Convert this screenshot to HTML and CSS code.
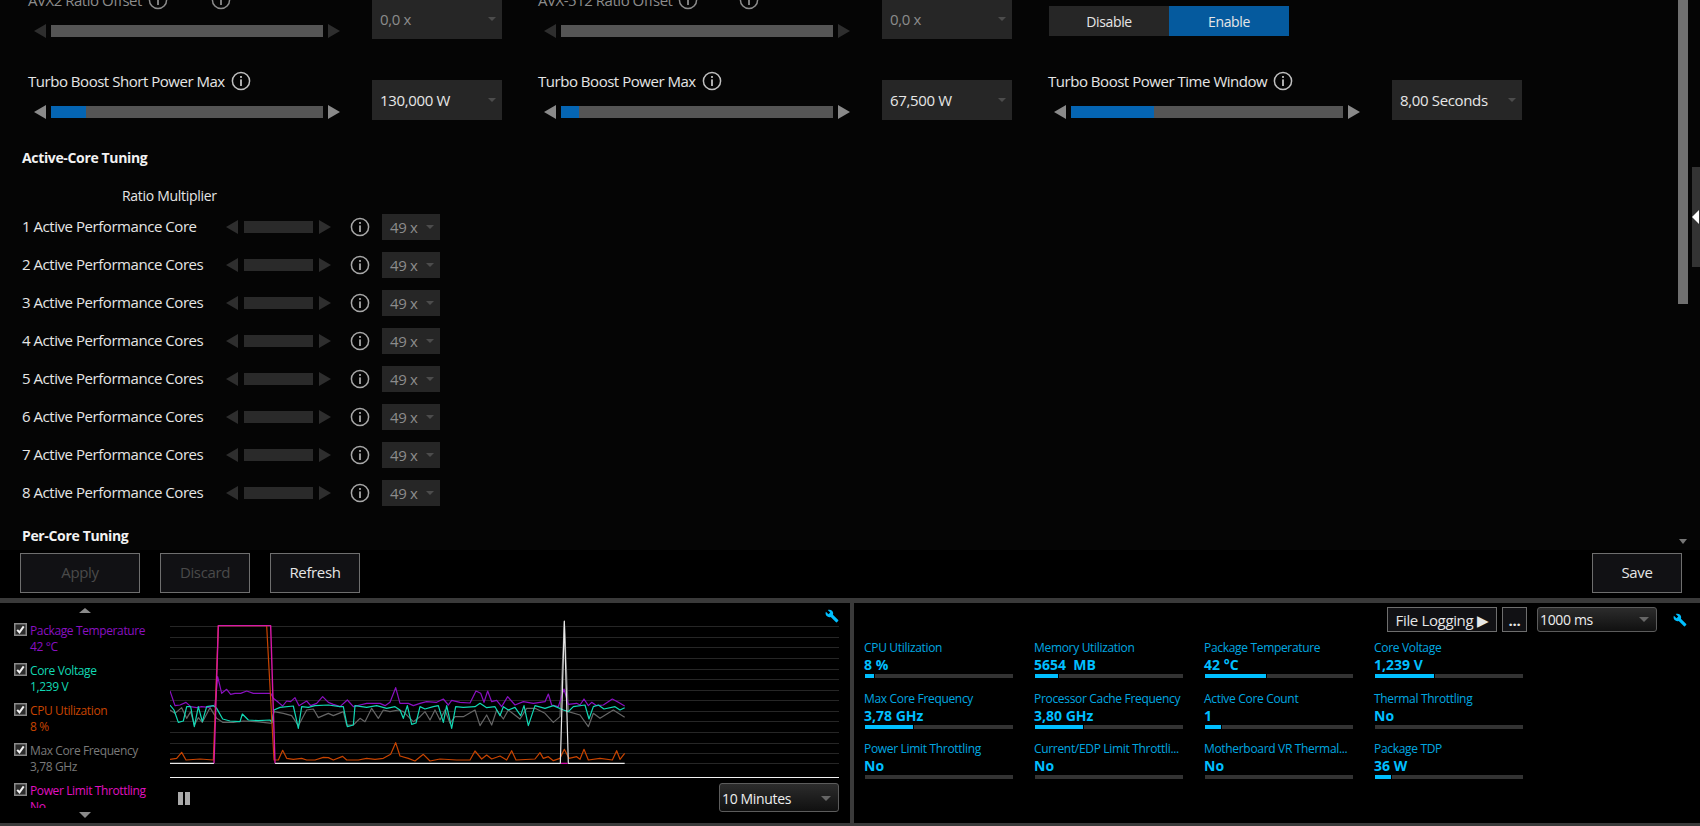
FILE: index.html
```html
<!DOCTYPE html>
<html lang="en">
<head>
<meta charset="utf-8">
<title>Intel XTU</title>
<link rel="stylesheet" href="styles.css">
</head>
<body>
<svg class="defs" width="0" height="0" aria-hidden="true">
  <symbol id="info" viewBox="0 0 20 20">
    <circle cx="10" cy="10" r="8.6" fill="none" stroke="currentColor" stroke-width="1.5"/>
    <rect x="9.1" y="8.4" width="1.8" height="6.6" fill="currentColor"/>
    <rect x="9.1" y="5" width="1.8" height="1.9" fill="currentColor"/>
  </symbol>
  <symbol id="wrench" viewBox="0 0 24 24">
    <path fill="currentColor" d="M22.7 19l-9.1-9.1c.9-2.3.4-5-1.5-6.9-2-2-5-2.4-7.4-1.3L9 6 6 9 1.6 4.7C.4 7.1.9 10.1 2.9 12.1c1.9 1.9 4.6 2.4 6.9 1.5l9.1 9.1c.4.4 1 .4 1.4 0l2.3-2.3c.5-.4.5-1.1.1-1.4z"/>
  </symbol>
  <symbol id="check" viewBox="0 0 13 13">
    <rect x=".75" y=".75" width="11.5" height="11.5" fill="#2b2b2b" stroke="#8a8a8a" stroke-width="1.5"/>
    <path d="M3.2 6.8l2.3 2.6 4.2-6" fill="none" stroke="#f2f2f2" stroke-width="2"/>
  </symbol>
</svg>

<main class="tuning">
  <div class="scroller">
    <div class="settings">
      <div class="setting">
        <div class="setting-main">
          <div class="setting-label dim">AVX2 Ratio Offset <svg class="info"><use href="#info"/></svg><svg class="info second"><use href="#info"/></svg></div>
          <div class="slider"><i class="arrow left off"></i><div class="track"></div><i class="arrow right off"></i></div>
        </div>
        <div class="select dim"><span>0,0 x</span><i class="caret"></i></div>
      </div>
      <div class="setting">
        <div class="setting-main">
          <div class="setting-label dim">AVX-512 Ratio Offset <svg class="info"><use href="#info"/></svg><svg class="info second-b"><use href="#info"/></svg></div>
          <div class="slider"><i class="arrow left off"></i><div class="track"></div><i class="arrow right off"></i></div>
        </div>
        <div class="select dim"><span>0,0 x</span><i class="caret"></i></div>
      </div>
      <div class="setting">
        <div class="toggle"><span class="toggle-item">Disable</span><span class="toggle-item on">Enable</span></div>
      </div>

      <div class="setting">
        <div class="setting-main">
          <div class="setting-label">Turbo Boost Short Power Max <svg class="info"><use href="#info"/></svg></div>
          <div class="slider"><i class="arrow left"></i><div class="track"><div class="track-fill" style="width:35px"></div></div><i class="arrow right"></i></div>
        </div>
        <div class="select"><span>130,000 W</span><i class="caret"></i></div>
      </div>
      <div class="setting">
        <div class="setting-main">
          <div class="setting-label">Turbo Boost Power Max <svg class="info"><use href="#info"/></svg></div>
          <div class="slider"><i class="arrow left"></i><div class="track"><div class="track-fill" style="width:18px"></div></div><i class="arrow right"></i></div>
        </div>
        <div class="select"><span>67,500 W</span><i class="caret"></i></div>
      </div>
      <div class="setting">
        <div class="setting-main">
          <div class="setting-label">Turbo Boost Power Time Window <svg class="info"><use href="#info"/></svg></div>
          <div class="slider"><i class="arrow left"></i><div class="track"><div class="track-fill" style="width:83px"></div></div><i class="arrow right"></i></div>
        </div>
        <div class="select"><span>8,00 Seconds</span><i class="caret"></i></div>
      </div>
    </div>

    <h2 class="section-title">Active-Core Tuning</h2>
    <div class="ratio-head">Ratio Multiplier</div>
    <div class="core-list">
      <div class="core-row"><span class="core-name">1 Active Performance Core</span><i class="arrow left off"></i><div class="core-track"></div><i class="arrow right off"></i><svg class="info core-info"><use href="#info"/></svg><div class="core-select"><span>49 x</span><i class="caret"></i></div></div>
      <div class="core-row"><span class="core-name">2 Active Performance Cores</span><i class="arrow left off"></i><div class="core-track"></div><i class="arrow right off"></i><svg class="info core-info"><use href="#info"/></svg><div class="core-select"><span>49 x</span><i class="caret"></i></div></div>
      <div class="core-row"><span class="core-name">3 Active Performance Cores</span><i class="arrow left off"></i><div class="core-track"></div><i class="arrow right off"></i><svg class="info core-info"><use href="#info"/></svg><div class="core-select"><span>49 x</span><i class="caret"></i></div></div>
      <div class="core-row"><span class="core-name">4 Active Performance Cores</span><i class="arrow left off"></i><div class="core-track"></div><i class="arrow right off"></i><svg class="info core-info"><use href="#info"/></svg><div class="core-select"><span>49 x</span><i class="caret"></i></div></div>
      <div class="core-row"><span class="core-name">5 Active Performance Cores</span><i class="arrow left off"></i><div class="core-track"></div><i class="arrow right off"></i><svg class="info core-info"><use href="#info"/></svg><div class="core-select"><span>49 x</span><i class="caret"></i></div></div>
      <div class="core-row"><span class="core-name">6 Active Performance Cores</span><i class="arrow left off"></i><div class="core-track"></div><i class="arrow right off"></i><svg class="info core-info"><use href="#info"/></svg><div class="core-select"><span>49 x</span><i class="caret"></i></div></div>
      <div class="core-row"><span class="core-name">7 Active Performance Cores</span><i class="arrow left off"></i><div class="core-track"></div><i class="arrow right off"></i><svg class="info core-info"><use href="#info"/></svg><div class="core-select"><span>49 x</span><i class="caret"></i></div></div>
      <div class="core-row"><span class="core-name">8 Active Performance Cores</span><i class="arrow left off"></i><div class="core-track"></div><i class="arrow right off"></i><svg class="info core-info"><use href="#info"/></svg><div class="core-select"><span>49 x</span><i class="caret"></i></div></div>
    </div>
    <h2 class="section-title per-core">Per-Core Tuning</h2>
  </div>
  <div class="scrollbar"><div class="thumb"></div><i class="scroll-down"></i></div>
  <div class="side-handle"><i class="handle-arrow"></i></div>
</main>

<div class="actions">
  <button class="btn off wide">Apply</button>
  <button class="btn off">Discard</button>
  <button class="btn">Refresh</button>
  <button class="btn save">Save</button>
</div>

<div class="h-divider"></div>

<section class="monitor">
  <div class="graph-panel">
    <aside class="legend">
      <i class="legend-up"></i>
      <div class="legend-list">
        <div class="legend-item purple"><svg class="cb"><use href="#check"/></svg><div class="legend-text">Package Temperature<br>42 °C</div></div>
        <div class="legend-item teal"><svg class="cb"><use href="#check"/></svg><div class="legend-text">Core Voltage<br>1,239 V</div></div>
        <div class="legend-item orange"><svg class="cb"><use href="#check"/></svg><div class="legend-text">CPU Utilization<br>8 %</div></div>
        <div class="legend-item grey"><svg class="cb"><use href="#check"/></svg><div class="legend-text">Max Core Frequency<br>3,78 GHz</div></div>
        <div class="legend-item pink"><svg class="cb"><use href="#check"/></svg><div class="legend-text">Power Limit Throttling<br>No</div></div>
      </div>
      <i class="legend-down"></i>
    </aside>
    <div class="graph">
      <svg class="wrench graph-wrench"><use href="#wrench"/></svg>
      <svg class="plot" viewBox="510 75 2007 480" preserveAspectRatio="none">
        <g stroke="#262626" stroke-width="3">
          <path d="M510 94.5H2517M510 127.5H2517M510 157.5H2517M510 190.5H2517M510 223.5H2517M510 253.5H2517M510 286.5H2517M510 316.5H2517M510 349.5H2517M510 379.5H2517M510 412.5H2517M510 445.5H2517M510 475.5H2517M510 505.5H2517"/>
        </g>
        <path d="M510 547.5H2517" stroke="#f2f2f2" stroke-width="3.6"/>
        <g fill="none" stroke-width="3.6" stroke-linejoin="round">
          <polyline stroke="#666" points="510,345 525,355 545,338 560,370 572,350 583,390 595,368 607,382 630,338 650,370 668,382 700,382 730,378 770,380 815,385 822,350 850,355 875,362 895,392 920,345 940,342 955,368 985,355 1000,362 1030,350 1040,390 1060,390 1080,370 1095,380 1115,340 1135,370 1150,345 1170,350 1195,345 1210,350 1240,380 1260,365 1275,350 1290,375 1305,345 1320,375 1335,345 1350,385 1365,365 1390,365 1425,345 1440,392 1460,360 1475,390 1490,345 1510,372 1525,345 1560,372 1580,340 1605,340 1635,355 1660,382 1680,365 1693,80 1705,350 1740,360 1765,395 1780,355 1800,370 1840,345 1874,367"/>
          <polyline stroke="#8a10c0" points="510,288 525,332 540,330 558,322 572,335 590,338 605,335 625,337 645,330 653,245 665,295 680,283 692,298 705,295 722,295 740,288 760,295 780,295 812,295 820,310 835,322 848,333 860,318 872,320 885,308 897,332 920,318 932,332 950,325 968,305 985,322 1000,328 1020,335 1042,315 1060,335 1080,330 1100,325 1140,325 1155,332 1170,322 1187,278 1200,325 1225,325 1240,332 1260,325 1280,320 1310,322 1330,312 1345,330 1355,316 1380,322 1410,324 1428,288 1442,295 1452,322 1463,288 1475,320 1490,316 1505,335 1523,305 1545,330 1570,320 1600,325 1635,320 1645,297 1655,330 1675,335 1692,282 1705,328 1730,325 1740,330 1752,312 1765,332 1775,322 1790,332 1810,330 1837,312 1855,322 1874,333"/>
          <polyline stroke="#12d8b4" points="510,330 522,345 535,382 550,378 560,335 572,335 583,395 595,335 607,380 620,335 640,332 650,340 668,372 690,378 720,380 727,357 745,375 775,377 810,375 816,382 822,345 840,337 880,333 895,400 905,335 925,337 945,332 985,330 1020,335 1030,335 1042,395 1060,390 1065,332 1100,337 1130,332 1160,340 1185,335 1200,345 1210,370 1222,332 1235,388 1248,384 1260,335 1275,342 1300,335 1315,332 1330,382 1340,332 1355,400 1367,335 1390,337 1425,335 1440,325 1460,338 1485,335 1500,362 1510,335 1525,345 1545,337 1562,362 1572,332 1585,392 1605,332 1635,340 1660,332 1690,345 1705,350 1720,335 1755,330 1767,372 1780,335 1795,330 1812,342 1845,335 1860,345 1874,338"/>
          <polyline stroke="#c84400" points="510,493 530,490 545,472 558,495 600,492 640,495 655,92 800,92 822,495 835,495 848,466 860,490 880,493 905,490 920,495 945,495 970,487 985,488 1000,495 1028,484 1040,495 1075,495 1100,490 1125,493 1150,490 1172,478 1187,443 1200,483 1225,490 1245,498 1270,478 1290,498 1320,492 1370,495 1410,495 1425,468 1445,492 1460,480 1475,492 1500,483 1520,495 1535,467 1548,495 1605,492 1620,473 1630,490 1645,485 1660,497 1680,490 1693,463 1707,490 1730,485 1740,493 1752,463 1765,495 1800,490 1837,495 1850,467 1860,493 1874,475"/>
          <polyline stroke="#e8e8e8" points="510,505 642,505"/>
          <polyline stroke="#e8e8e8" points="825,505 1681,505 1693,78 1705,505 1874,505"/>
          <polyline stroke="#d818a8" stroke-width="4.2" points="642,505 655,92 812,92 825,505"/>
          <polyline stroke="#e010b8" points="1683,505 1703,505"/>
        </g>
      </svg>
      <div class="graph-controls">
        <div class="pause"><i></i><i></i></div>
        <div class="dropdown time"><span>10 Minutes</span><i class="caret"></i></div>
      </div>
    </div>
  </div>
  <div class="v-divider"></div>
  <div class="metrics-panel">
    <div class="metrics-bar">
      <button class="btn small log">File Logging ▶</button>
      <button class="btn small dots">...</button>
      <div class="dropdown rate"><span>1000 ms</span><i class="caret"></i></div>
      <svg class="wrench bar-wrench"><use href="#wrench"/></svg>
    </div>
    <div class="metrics-grid">
      <div class="metric"><div class="m-label">CPU Utilization</div><div class="m-value">8 %</div><div class="m-bar"><div class="m-fill" style="width:9px"></div><div class="m-rest"></div></div></div>
      <div class="metric"><div class="m-label">Memory Utilization</div><div class="m-value">5654&nbsp; MB</div><div class="m-bar"><div class="m-fill" style="width:23px"></div><div class="m-rest"></div></div></div>
      <div class="metric"><div class="m-label">Package Temperature</div><div class="m-value">42 °C</div><div class="m-bar"><div class="m-fill" style="width:61px"></div><div class="m-rest"></div></div></div>
      <div class="metric"><div class="m-label">Core Voltage</div><div class="m-value">1,239 V</div><div class="m-bar"><div class="m-fill" style="width:59px"></div><div class="m-rest"></div></div></div>
      <div class="metric"><div class="m-label">Max Core Frequency</div><div class="m-value">3,78 GHz</div><div class="m-bar"><div class="m-fill" style="width:48px"></div><div class="m-rest"></div></div></div>
      <div class="metric"><div class="m-label">Processor Cache Frequency</div><div class="m-value">3,80 GHz</div><div class="m-bar"><div class="m-fill" style="width:48px"></div><div class="m-rest"></div></div></div>
      <div class="metric"><div class="m-label">Active Core Count</div><div class="m-value">1</div><div class="m-bar"><div class="m-fill" style="width:16px"></div><div class="m-rest"></div></div></div>
      <div class="metric"><div class="m-label">Thermal Throttling</div><div class="m-value">No</div><div class="m-bar"><div class="m-rest"></div></div></div>
      <div class="metric"><div class="m-label">Power Limit Throttling</div><div class="m-value">No</div><div class="m-bar"><div class="m-rest"></div></div></div>
      <div class="metric"><div class="m-label">Current/EDP Limit Throttli...</div><div class="m-value">No</div><div class="m-bar"><div class="m-rest"></div></div></div>
      <div class="metric"><div class="m-label">Motherboard VR Thermal...</div><div class="m-value">No</div><div class="m-bar"><div class="m-rest"></div></div></div>
      <div class="metric"><div class="m-label">Package TDP</div><div class="m-value">36 W</div><div class="m-bar"><div class="m-fill" style="width:16px"></div><div class="m-rest"></div></div></div>
    </div>
  </div>
</section>
<div class="bottom-bar"></div>
</body>
</html>
```
FILE: styles.css
```css
* { box-sizing: border-box; }
html, body { margin: 0; padding: 0; }
body {
  width: 1700px;
  height: 826px;
  overflow: hidden;
  background: #000;
  color: #e6e6e6;
  font-family: "Open Sans", "Noto Sans", sans-serif;
  font-size: 15px;
  letter-spacing: -0.35px;
}
i { display: block; font-style: normal; }
.defs { position: absolute; }

/* upper tuning pane */
.tuning {
  position: relative;
  height: 550px;
  overflow: hidden;
  background: #050505;
}
.scroller { width: 1678px; }
.settings {
  display: grid;
  grid-template-columns: repeat(3, 510px);
  grid-auto-rows: 81px;
  margin-top: -9px;
  padding-left: 28px;
}
.setting { display: flex; }
.setting-main { width: 344px; flex: none; }
.setting-label {
  display: flex;
  align-items: center;
  height: 20px;
  padding-bottom: 2px;
  white-space: nowrap;
  color: #e6e6e6;
  letter-spacing: -0.47px;
}
.setting-label.dim { color: #8c8c8c; }
.info { width: 20px; height: 20px; margin-left: 6px; color: #c0c0c0; flex: none; }
.dim .info { color: #8c8c8c; }
.info.second { margin-left: 43px; }
.info.second-b { margin-left: 41px; }
.slider {
  display: flex;
  align-items: center;
  width: 306px;
  margin: 13px 0 0 6px;
  height: 14px;
  justify-content: space-between;
}
.track { width: 272px; height: 12px; background: #555; }
.track-fill { height: 100%; background: #0565b3; }
.arrow { width: 0; height: 0; border-style: solid; flex: none; }
.arrow.left { border-width: 7px 12px 7px 0; border-color: transparent #8a8a8a transparent transparent; }
.arrow.right { border-width: 7px 0 7px 12px; border-color: transparent transparent transparent #8a8a8a; }
.arrow.left.off { border-right-color: #2e2e2e; }
.arrow.right.off { border-left-color: #2e2e2e; }
.select {
  display: flex;
  align-items: center;
  justify-content: space-between;
  width: 130px;
  height: 40px;
  margin-top: 8px;
  padding: 0 6px 0 8px;
  background: #262626;
  color: #e6e6e6;
  white-space: nowrap;
}
.select.dim { color: #8c8c8c; }
.caret {
  width: 0;
  height: 0;
  border-style: solid;
  border-width: 4px 4px 0 4px;
  border-color: #4c4c4c transparent transparent transparent;
  flex: none;
}
.toggle { display: flex; margin: 15px 0 0 1px; }
.toggle-item {
  width: 120px;
  height: 30px;
  line-height: 32px;
  text-align: center;
  background: #262626;
  font-size: 14px;
}
.toggle-item.on { background: #055a9e; }

.section-title {
  margin: -5px 0 0 22px;
  height: 20px;
  line-height: 20px;
  font-size: 14px;
  font-weight: 700;
  color: #f2f2f2;
}
.ratio-head {
  margin: 18px 0 0 122px;
  height: 20px;
  line-height: 20px;
  font-size: 14px;
  letter-spacing: -0.3px;
}
.core-list { margin-top: 2px; padding-left: 22px; }
.core-row { display: flex; align-items: center; height: 38px; }
.core-name { width: 204px; flex: none; padding-bottom: 2px; white-space: nowrap; letter-spacing: -0.45px; }
.core-track { width: 69px; height: 12px; margin: 0 6px; background: #2a2a2a; }
.core-info { margin-left: 19px; color: #a8a8a8; }
.core-select {
  display: flex;
  align-items: center;
  justify-content: space-between;
  width: 58px;
  height: 26px;
  margin-left: 12px;
  padding: 0 6px 0 8px;
  background: #262626;
  color: #8c8c8c;
}
.section-title.per-core { margin-top: 14px; }

.scrollbar { position: absolute; top: 0; right: 12px; width: 10px; height: 550px; }
.thumb { height: 304px; background: #707070; }
.scroll-down {
  position: absolute;
  left: 1px;
  top: 539px;
  width: 0;
  height: 0;
  border-style: solid;
  border-width: 5px 4px 0 4px;
  border-color: #777 transparent transparent transparent;
}
.side-handle {
  position: absolute;
  top: 167px;
  right: 0;
  width: 8px;
  height: 100px;
  background: #333;
  display: flex;
  align-items: center;
}
.handle-arrow {
  width: 0;
  height: 0;
  border-style: solid;
  border-width: 7px 7px 7px 0;
  border-color: transparent #fff transparent transparent;
}

/* action buttons */
.actions {
  display: flex;
  height: 48px;
  padding: 3px 18px 0 20px;
  gap: 20px;
  background: #000;
  align-items: flex-start;
}
.btn {
  width: 90px;
  height: 40px;
  padding: 0 0 2px;
  background: #111114;
  border: 1px solid #6e6e6e;
  color: #e6e6e6;
  font-family: inherit;
  font-size: 15px;
  letter-spacing: inherit;
}
.btn.off { color: #4a4a4a; }
.btn.wide { width: 120px; }
.btn.save { margin-left: auto; }
.h-divider { height: 5px; background: #3a3a3a; }

/* monitor panes */
.monitor { display: flex; height: 220px; background: #000; }
.graph-panel { display: flex; width: 850px; flex: none; }
.v-divider { width: 4px; flex: none; background: #3a3a3a; }
.legend { width: 170px; flex: none; padding-top: 5px; }
.legend-up, .legend-down {
  width: 0;
  height: 0;
  margin-left: 79px;
  border-style: solid;
  border-color: transparent;
}
.legend-up { border-width: 0 6px 5px 6px; border-bottom-color: #8a8a8a; }
.legend-down { margin-top: 4px; border-width: 6px 6px 0 6px; border-top-color: #8a8a8a; }
.legend-list { height: 186px; margin-top: 9px; padding-left: 14px; overflow: hidden; }
.legend-item {
  display: flex;
  height: 40px;
  font-size: 12px;
  line-height: 16px;
  white-space: nowrap;
  letter-spacing: -0.38px;
}
.legend-text { padding-top: 1px; }
.cb { width: 13px; height: 13px; margin: 1px 3px 0 0; flex: none; }
.purple { color: #8a10c0; }
.teal { color: #12d8b4; }
.orange { color: #c84400; }
.grey { color: #7a7a7a; }
.pink { color: #e010c0; }

.graph { position: relative; width: 669px; flex: none; padding-top: 17px; }
.wrench { width: 14px; height: 14px; color: #00bfff; flex: none; }
.graph-wrench { position: absolute; top: 6px; right: 0; }
.plot { display: block; width: 669px; height: 160px; }
.graph-controls {
  display: flex;
  justify-content: space-between;
  align-items: center;
  margin-top: 3px;
  height: 29px;
}
.pause { display: flex; gap: 2px; margin: 2px 0 0 8px; }
.pause i { width: 5px; height: 13px; background: #aaa; }
.dropdown {
  display: flex;
  align-items: center;
  justify-content: space-between;
  width: 120px;
  padding: 0 7px 0 2px;
  border: 1px solid #5c5c5c;
  border-radius: 3px;
  background: linear-gradient(#2c2c2c, #101010);
  color: #eee;
  font-size: 14px;
}
.dropdown .caret { border-top-color: #666; border-width: 5px 5px 0 5px; }
.time { height: 29px; padding-top: 2px; }

.metrics-panel { flex: 1; min-width: 0; }
.metrics-bar { display: flex; align-items: center; height: 25px; margin: 4px 13px 0 0; justify-content: flex-end; }
.btn.small { height: 25px; font-size: 15px; padding: 0; }
.btn.log { width: 110px; }
.btn.dots { width: 25px; margin-left: 5px; font-weight: 700; }
.rate { height: 25px; margin-left: 10px; }
.bar-wrench { margin-left: 16px; }
.metrics-grid {
  display: grid;
  grid-template-columns: repeat(4, 170px);
  grid-auto-rows: 50.5px;
  margin-top: 7px;
  padding-left: 10px;
}
.m-label { height: 16px; line-height: 18px; font-size: 12px; color: #00a8e0; white-space: nowrap; letter-spacing: -0.32px; }
.m-value { height: 18px; line-height: 20px; font-size: 14px; font-weight: 700; color: #00bfff; letter-spacing: 0; }
.m-bar { display: flex; gap: 1px; width: 148px; height: 4px; margin: 1px 0 0 1px; }
.m-fill { background: #00bfff; height: 100%; flex: none; }
.m-rest { flex: 1; background: #333; }
.bottom-bar { height: 3px; background: #3a3a3a; }
```
